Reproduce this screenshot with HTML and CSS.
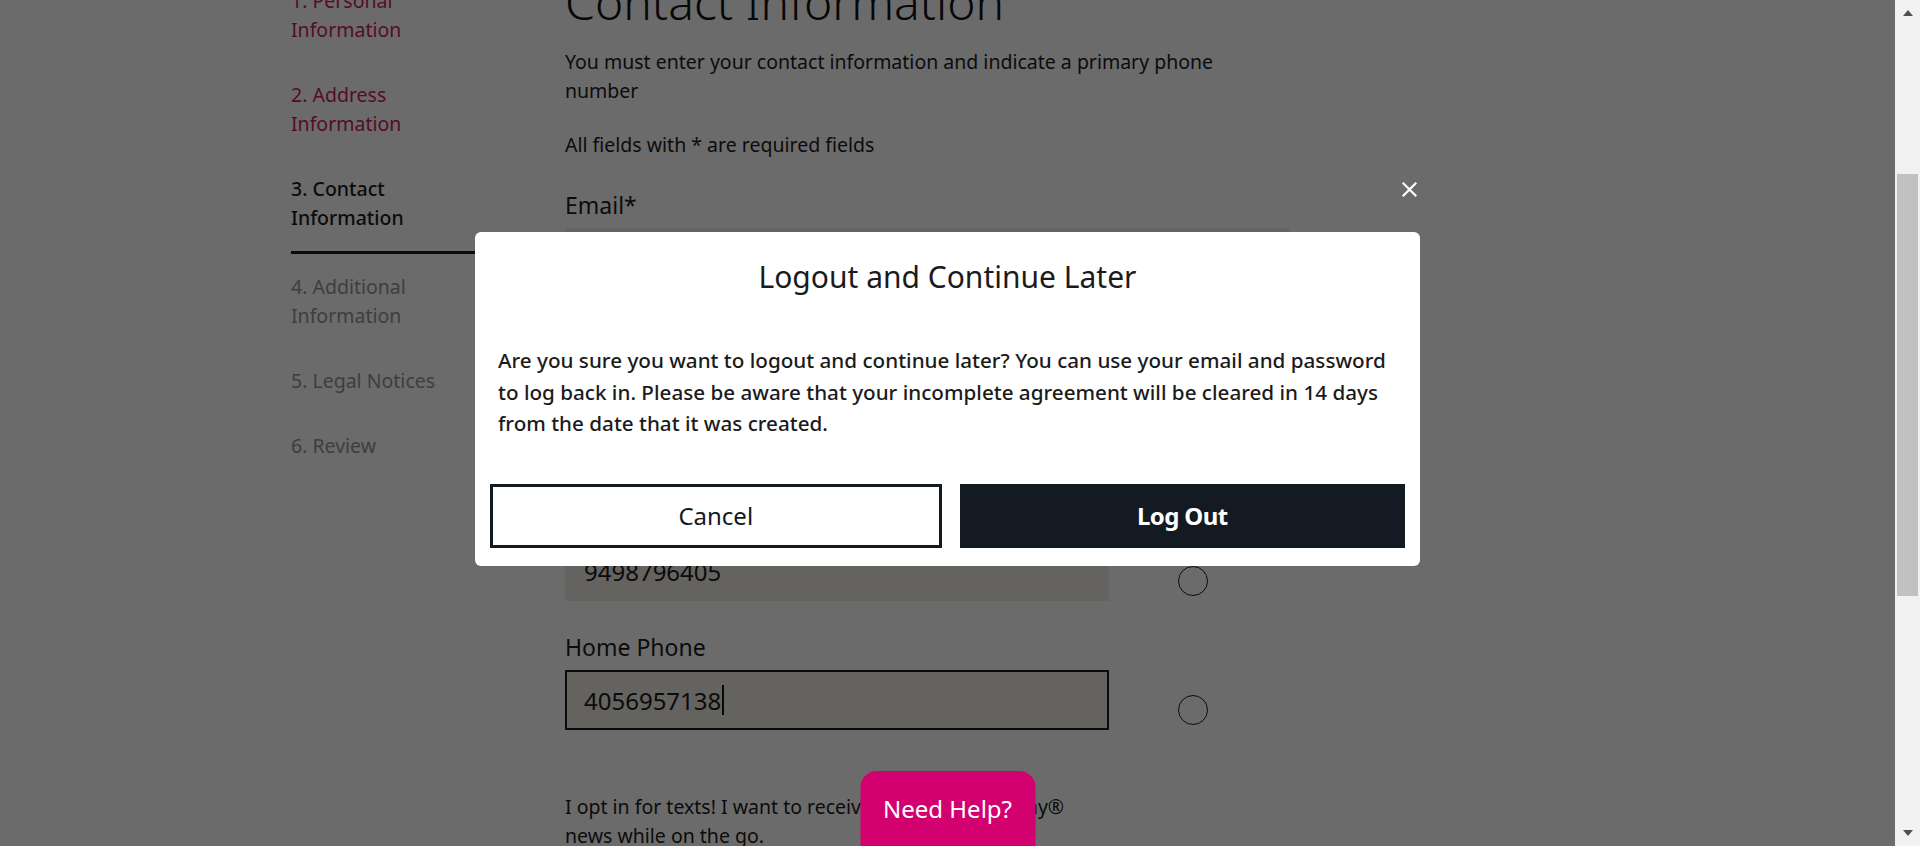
FILE: index.html
```html
<!DOCTYPE html>
<html lang="en">
<head>
<meta charset="utf-8">
<title>Contact Information</title>
<link rel="stylesheet" href="styles.css">
</head>
<body>
<div class="app">
  <div class="viewport">
    <div class="layout">
      <nav class="steps">
        <div class="step done">1. Personal Information</div>
        <div class="step done">2. Address Information</div>
        <div class="step active">3. Contact Information</div>
        <div class="step todo">4. Additional Information</div>
        <div class="step todo">5. Legal Notices</div>
        <div class="step todo">6. Review</div>
      </nav>
      <main class="content">
        <h1 class="title">Contact Information</h1>
        <p class="intro">You must enter your contact information and indicate a primary phone number</p>
        <p class="req">All fields with * are required fields</p>

        <div class="field first">
          <label class="label">Email*</label>
          <div class="input wide">jordan.miller@example.com</div>
        </div>
        <div class="field">
          <label class="label">Confirm Email*</label>
          <div class="input wide">jordan.miller@example.com</div>
        </div>

        <div class="phone-head">Primary</div>

        <div class="phone-field">
          <label class="label">Mobile Phone*</label>
          <div class="phone-row">
            <div class="input">9498796405</div>
            <span class="radio"></span>
          </div>
        </div>
        <div class="phone-field home">
          <label class="label">Home Phone</label>
          <div class="phone-row">
            <div class="input focus">4056957138<span class="caret"></span></div>
            <span class="radio"></span>
          </div>
        </div>

        <p class="optin">I opt in for texts! I want to receive exclusive Snap Pay® news while on the go.</p>
      </main>
    </div>

    <div class="overlay">
      <div class="modal">
        <button class="close" aria-label="Close">
          <svg width="15" height="15" viewBox="0 0 15 15"><path d="M1.5 1.5 L13.5 13.5 M13.5 1.5 L1.5 13.5" stroke="#fff" stroke-width="2.2" stroke-linecap="square"/></svg>
        </button>
        <h2 class="modal-title">Logout and Continue Later</h2>
        <p class="modal-text">Are you sure you want to logout and continue later? You can use your email and password to log back in. Please be aware that your incomplete agreement will be cleared in 14 days from the date that it was created.</p>
        <div class="actions">
          <button class="btn btn-outline">Cancel</button>
          <button class="btn btn-dark">Log Out</button>
        </div>
      </div>
    </div>

    <button class="help">Need Help?</button>
  </div>

  <div class="scrollbar">
    <div class="sb-btn"><span class="arrow-up"></span></div>
    <div class="sb-track"><div class="sb-thumb"></div></div>
    <div class="sb-btn"><span class="arrow-down"></span></div>
  </div>
</div>
</body>
</html>
```

FILE: styles.css
```css
html, body {
  margin: 0;
  padding: 0;
  height: 846px;
  overflow: hidden;
}

body {
  font-family: "Noto Sans", "Open Sans", sans-serif;
  color: #1b1b1b;
  background: #fff;
}

.app {
  display: flex;
  height: 846px;
}

.viewport {
  position: relative;
  flex: 1;
  height: 846px;
  overflow: hidden;
  background: #fff;
}

/* page content (scrolled state) */
.layout {
  width: 1313px;
  margin: -34px auto 0;
  display: flex;
  gap: 84px;
}

.steps {
  width: 190px;
  flex: none;
  padding-top: 1.5px;
}

.step {
  padding: 18px 0;
  font-size: 19.5px;
  line-height: 29px;
}

.step.done { color: #cc1b5e; }
.step.active {
  color: #1b1b1b;
  font-weight: 500;
  border-bottom: 3px solid #1b1b1b;
  padding-bottom: 19px;
}
.step.todo { color: #959595; }

.content {
  width: 724px;
  padding-top: 8px;
}

.title {
  margin: 0;
  font-size: 48px;
  font-weight: 300;
  line-height: 56px;
  color: #111;
}

.intro {
  margin: 17px 0 0;
  max-width: 690px;
  font-size: 19.5px;
  line-height: 29px;
}

.req {
  margin: 25px 0 0;
  font-size: 19.5px;
  line-height: 29px;
}

.field { margin-top: 33px; }
.field.first { margin-top: 31px; }

.label {
  display: block;
  font-size: 23px;
  line-height: 30px;
  margin-bottom: 8px;
}

.input {
  box-sizing: border-box;
  height: 60px;
  width: 544px;
  background: #eeece5;
  padding: 0 19px;
  display: flex;
  align-items: center;
  font-size: 24px;
  color: #1b1b1b;
}

.input.wide { width: 724px; }

.input.focus {
  border: 2px solid #1c1c1c;
  padding-left: 17px;
}

.caret {
  display: inline-block;
  width: 2px;
  height: 30px;
  background: #111;
  margin-left: 1px;
}

.phone-head {
  margin-top: 33px;
  height: 30px;
  line-height: 30px;
  font-size: 18px;
  padding-left: 596px;
  margin-bottom: -12px;
}

.phone-field { margin-top: 33px; }
.phone-field.home { margin-top: 31px; }

.phone-row {
  display: flex;
  align-items: center;
}

.radio {
  box-sizing: border-box;
  width: 30px;
  height: 30px;
  border: 1.5px solid #1b1b1b;
  border-radius: 50%;
  margin-left: 69px;
  margin-top: 20px;
}

.optin {
  margin: 62px 0 0;
  max-width: 540px;
  font-size: 19.5px;
  line-height: 29px;
}

/* modal */
.overlay {
  position: absolute;
  inset: 0;
  background: rgba(0, 0, 0, 0.58);
  display: flex;
  justify-content: center;
  align-items: flex-start;
  padding-top: 232px;
}

.modal {
  position: relative;
  box-sizing: border-box;
  width: 945px;
  background: #fff;
  border-radius: 6px;
  padding: 27px 15px 18px;
}

.close {
  position: absolute;
  top: -50px;
  right: 3px;
  width: 15px;
  height: 15px;
  padding: 0;
  border: 0;
  background: none;
  display: flex;
}

.modal-title {
  margin: 0;
  text-align: center;
  font-size: 30px;
  font-weight: 400;
  line-height: 36px;
  color: #1b1b1b;
}

.modal-text {
  margin: 50px 8px 0 8px;
  font-size: 20.65px;
  font-weight: 500;
  line-height: 31.5px;
  color: #1b1b1b;
}

.actions {
  display: flex;
  gap: 18px;
  margin-top: 44px;
}

.btn {
  flex: 1 1 0;
  min-width: 0;
  height: 64px;
  font-family: "Noto Sans", sans-serif;
  font-size: 24px;
  cursor: pointer;
}

.btn-outline {
  background: #fff;
  color: #131a22;
  border: 3px solid #131a22;
}

.btn-dark {
  background: #131a22;
  color: #fff;
  border: 0;
  font-weight: 700;
  letter-spacing: -0.6px;
}

/* floating help */
.help {
  position: absolute;
  left: 50%;
  bottom: -24px;
  transform: translateX(-50%);
  width: 175px;
  height: 99px;
  box-sizing: border-box;
  padding: 22px 0 0;
  border: 0;
  border-radius: 16px;
  background: #d3006f;
  color: #fff;
  font-family: "Noto Sans", sans-serif;
  font-size: 24px;
  line-height: 32px;
  display: flex;
  justify-content: center;
  align-items: flex-start;
}

/* scrollbar */
.scrollbar {
  width: 25px;
  flex: none;
  background: #f1f1f1;
  display: flex;
  flex-direction: column;
}

.sb-btn {
  height: 17px;
  display: flex;
  justify-content: center;
  align-items: center;
}

.arrow-up {
  width: 0;
  height: 0;
  border-left: 5.5px solid transparent;
  border-right: 5.5px solid transparent;
  border-bottom: 6px solid #505050;
  margin-top: 9px;
}

.arrow-down {
  width: 0;
  height: 0;
  border-left: 5.5px solid transparent;
  border-right: 5.5px solid transparent;
  border-top: 6px solid #505050;
  margin-bottom: 9px;
}

.sb-track {
  flex: 1;
}

.sb-thumb {
  margin: 157px 2px 0;
  height: 422px;
  background: #c1c1c1;
}
```
